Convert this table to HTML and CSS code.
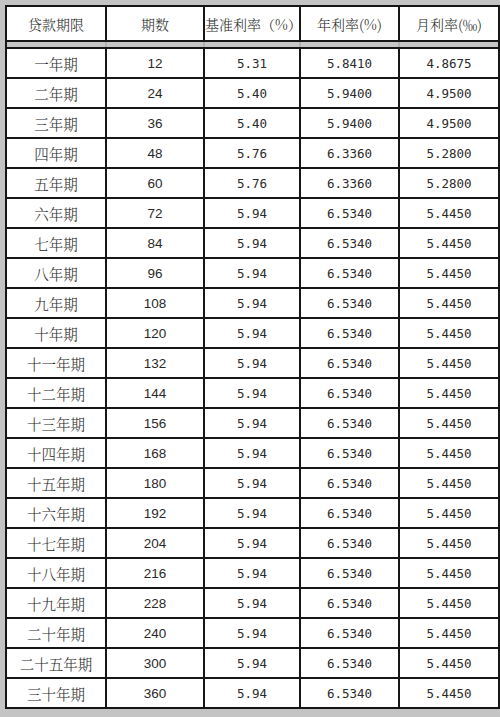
FILE: index.html
```html
<!DOCTYPE html>
<html lang="zh">
<head>
<meta charset="utf-8">
<link rel="stylesheet" href="styles.css">
</head>
<body>
<div class="frame">
<table class="rates">
<colgroup>
<col class="c1"><col class="c2"><col class="c3"><col class="c4"><col class="c5">
</colgroup>
<thead>
<tr class="head"><th>贷款期限</th><th>期数</th><th>基准利率（%）</th><th>年利率(%)</th><th>月利率(‰)</th></tr>
<tr class="sep"><td></td><td></td><td></td><td></td><td></td></tr>
</thead>
<tbody>
<tr><td class="cn">一年期</td><td class="n">12</td><td class="m">5.31</td><td class="m">5.8410</td><td class="m">4.8675</td></tr>
<tr><td class="cn">二年期</td><td class="n">24</td><td class="m">5.40</td><td class="m">5.9400</td><td class="m">4.9500</td></tr>
<tr><td class="cn">三年期</td><td class="n">36</td><td class="m">5.40</td><td class="m">5.9400</td><td class="m">4.9500</td></tr>
<tr><td class="cn">四年期</td><td class="n">48</td><td class="m">5.76</td><td class="m">6.3360</td><td class="m">5.2800</td></tr>
<tr><td class="cn">五年期</td><td class="n">60</td><td class="m">5.76</td><td class="m">6.3360</td><td class="m">5.2800</td></tr>
<tr><td class="cn">六年期</td><td class="n">72</td><td class="m">5.94</td><td class="m">6.5340</td><td class="m">5.4450</td></tr>
<tr><td class="cn">七年期</td><td class="n">84</td><td class="m">5.94</td><td class="m">6.5340</td><td class="m">5.4450</td></tr>
<tr><td class="cn">八年期</td><td class="n">96</td><td class="m">5.94</td><td class="m">6.5340</td><td class="m">5.4450</td></tr>
<tr><td class="cn">九年期</td><td class="n">108</td><td class="m">5.94</td><td class="m">6.5340</td><td class="m">5.4450</td></tr>
<tr><td class="cn">十年期</td><td class="n">120</td><td class="m">5.94</td><td class="m">6.5340</td><td class="m">5.4450</td></tr>
<tr><td class="cn">十一年期</td><td class="n">132</td><td class="m">5.94</td><td class="m">6.5340</td><td class="m">5.4450</td></tr>
<tr><td class="cn">十二年期</td><td class="n">144</td><td class="m">5.94</td><td class="m">6.5340</td><td class="m">5.4450</td></tr>
<tr><td class="cn">十三年期</td><td class="n">156</td><td class="m">5.94</td><td class="m">6.5340</td><td class="m">5.4450</td></tr>
<tr><td class="cn">十四年期</td><td class="n">168</td><td class="m">5.94</td><td class="m">6.5340</td><td class="m">5.4450</td></tr>
<tr><td class="cn">十五年期</td><td class="n">180</td><td class="m">5.94</td><td class="m">6.5340</td><td class="m">5.4450</td></tr>
<tr><td class="cn">十六年期</td><td class="n">192</td><td class="m">5.94</td><td class="m">6.5340</td><td class="m">5.4450</td></tr>
<tr><td class="cn">十七年期</td><td class="n">204</td><td class="m">5.94</td><td class="m">6.5340</td><td class="m">5.4450</td></tr>
<tr><td class="cn">十八年期</td><td class="n">216</td><td class="m">5.94</td><td class="m">6.5340</td><td class="m">5.4450</td></tr>
<tr><td class="cn">十九年期</td><td class="n">228</td><td class="m">5.94</td><td class="m">6.5340</td><td class="m">5.4450</td></tr>
<tr><td class="cn">二十年期</td><td class="n">240</td><td class="m">5.94</td><td class="m">6.5340</td><td class="m">5.4450</td></tr>
<tr><td class="cn">二十五年期</td><td class="n">300</td><td class="m">5.94</td><td class="m">6.5340</td><td class="m">5.4450</td></tr>
<tr><td class="cn">三十年期</td><td class="n">360</td><td class="m">5.94</td><td class="m">6.5340</td><td class="m">5.4450</td></tr>
</tbody>
</table>
</div>
</body>
</html>
```
FILE: styles.css
```css
html, body {
  margin: 0;
  padding: 0;
  background: #c4c4c4;
}
.frame {
  width: 500px;
  height: 717px;
  box-sizing: border-box;
  padding: 5px 2px 0 5px;
  background: #c4c4c4;
}
.rates {
  width: 493px;
  border-collapse: collapse;
  table-layout: fixed;
  background: #fff;
  color: #2a2a2a;
  font-family: "Noto Serif CJK SC", "Noto Sans CJK SC", "Liberation Serif", serif;
  font-size: 14px;
}
.c1 { width: 100px; }
.c2 { width: 98px; }
.c3 { width: 96px; }
.c4 { width: 99px; }
.c5 { width: 100px; }
.rates th, .rates td {
  border: 2px solid #161616;
  padding: 0;
  text-align: center;
  vertical-align: middle;
}
.rates th {
  font-weight: 300;
  height: 33px;
  font-size: 14px;
  letter-spacing: 0;
}
.sep td {
  height: 5px;
  background: #c6c6c6;
  border-top: 2px solid #161616;
  border-bottom: 2px solid #161616;
  border-left-color: #b0b0b0;
  border-right-color: #b0b0b0;
}
.sep td:first-child { border-left-color: #161616; }
.sep td:last-child { border-right-color: #161616; }
.rates tbody td {
  height: 28px;
}
.cn {
  font-weight: 300;
  font-size: 14.5px;
}
.n {
  font-family: "Liberation Sans", Arial, sans-serif;
  font-size: 13.5px;
}
.m {
  font-family: "DejaVu Sans Mono", "Liberation Mono", monospace;
  font-size: 12.5px;
}
```
